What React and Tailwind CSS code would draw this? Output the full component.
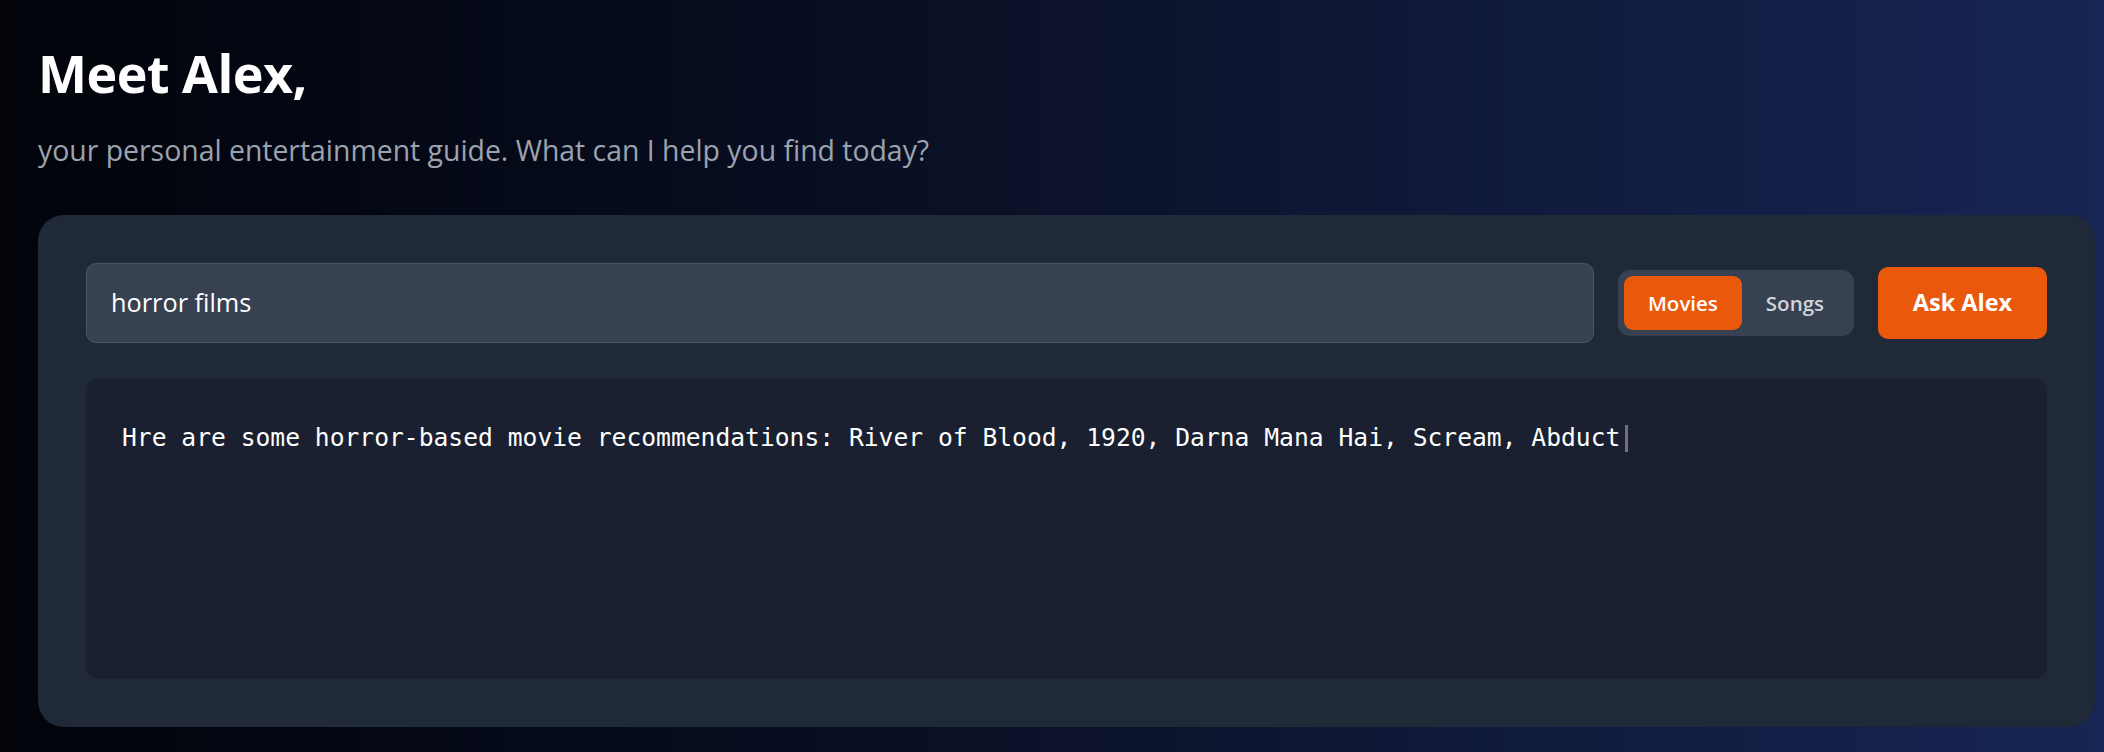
export default function App() {
  return (
    <div
      className="w-[2104px] h-[752px] overflow-hidden bg-gradient-to-r from-[#02040a] via-[#0b1229] to-[#172554] pl-[38px] pr-[9px] pt-[40px]"
      style={{ fontFamily: '"Open Sans", "Noto Sans", sans-serif' }}
    >
      <h1 className="text-[52px] leading-[65px] font-bold text-white tracking-[-0.5px]">Meet Alex,</h1>
      <p className="mt-[25px] text-[28.4px] leading-[40px] text-[#9ca3af]">
        your personal entertainment guide. What can I help you find today?
      </p>

      <div className="mt-[45px] rounded-[26px] bg-[#1f2937] p-[48px]">
        <div className="flex items-center gap-6">
          <div className="flex-1 h-[80px] flex items-center rounded-[10px] border border-[#4b5563] bg-[#374151] pl-[24px] text-[25.3px] text-white">
            horror films
          </div>
          <div className="flex items-center rounded-[12px] bg-[#374151] p-[6px]">
            <div className="h-[54px] flex items-center rounded-[9px] bg-[#ea580c] px-[24px] text-[20.5px] font-semibold text-white">
              Movies
            </div>
            <div className="h-[54px] flex items-center px-[24px] text-[20.5px] font-semibold text-[#d1d5db]">
              Songs
            </div>
          </div>
          <div className="h-[72px] w-[169px] flex items-center justify-center rounded-[10px] bg-[#ea580c] text-[23.5px] font-bold text-white">
            Ask Alex
          </div>
        </div>

        <div className="mt-[36px] h-[300px] rounded-[12px] bg-[#1a2030] px-[36px] pt-[40px]">
          <p
            className="text-[24.65px] leading-[38px] text-white flex items-center"
            style={{ fontFamily: '"DejaVu Sans Mono", "Liberation Mono", monospace' }}
          >
            <span className="whitespace-pre">Hre are some horror-based movie recommendations: River of Blood, 1920, Darna Mana Hai, Scream, Abduct</span>
            <span className="ml-[5px] inline-block w-[3px] h-[27px] bg-[#6b7280]"></span>
          </p>
        </div>
      </div>
    </div>
  );
}
